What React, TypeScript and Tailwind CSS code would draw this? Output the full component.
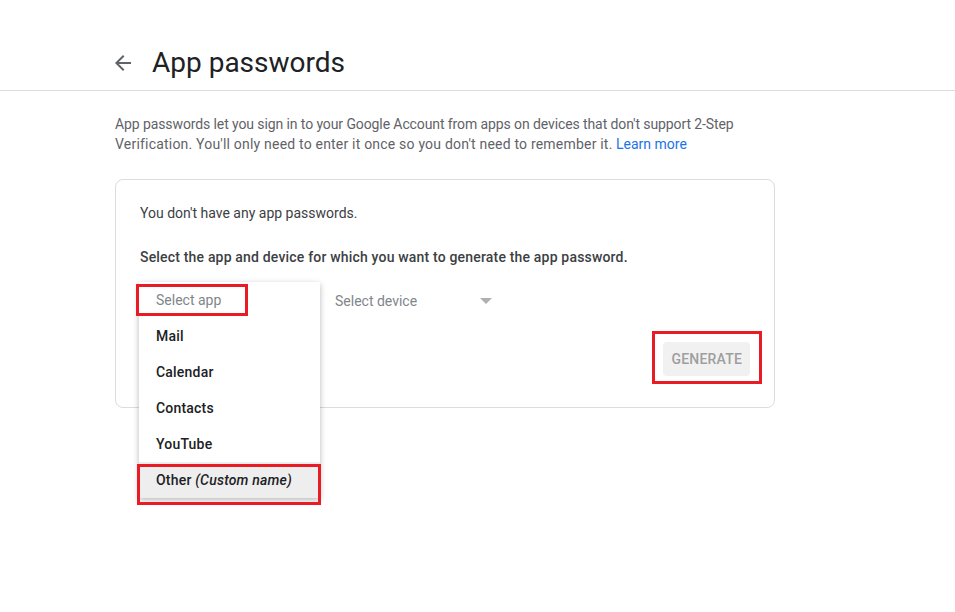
import React from "react";

const apps = ["Mail", "Calendar", "Contacts", "YouTube"];

const App: React.FC = () => {
  return (
    <div className="min-h-[612px] w-[955px] bg-white font-['Roboto','Liberation_Sans',sans-serif]">
      {/* Header */}
      <header className="h-[91px] border-b border-[#dadce0] pl-[111px] pt-[39px]">
        <div className="flex items-center">
          <svg width="24" height="24" viewBox="0 0 24 24" className="fill-[#5f6368]">
            <path d="M20 11H7.83l5.59-5.59L12 4l-8 8 8 8 1.41-1.41L7.83 13H20v-2z" />
          </svg>
          <h1 className="ml-[17px] text-[28px] leading-[48px] text-[#202124]">App passwords</h1>
        </div>
      </header>

      <main className="w-[660px] pl-[115px] box-content">
        <p className="mt-[23px] whitespace-nowrap text-[14px] leading-[20px] text-[#5f6368]">
          <span className="tracking-[-0.1px]">
            App passwords let you sign in to your Google Account from apps on devices that don't support 2-Step
          </span>
          <br />
          <span className="tracking-[0.2px]">
            Verification. You'll only need to enter it once so you don't need to remember it.
          </span>{" "}
          <a className="text-[#1a73e8]">Learn more</a>
        </p>

        {/* Card */}
        <div className="relative mt-[25px] h-[229px] rounded-lg border border-[#dadce0] px-[24px] pt-[23px]">
          <p className="text-[14px] leading-[20px] text-[#3c4043]">You don't have any app passwords.</p>
          <p className="mt-[24px] text-[14px] font-medium leading-[20px] tracking-[0.18px] text-[#3c4043]">
            Select the app and device for which you want to generate the app password.
          </p>

          <div className="mt-[16px] flex h-[36px] items-center">
            {/* Select app + open menu */}
            <div className="relative h-[36px] w-[180px]">
              <div className="absolute left-[-1px] top-[-1px] z-10 w-[181px] bg-white shadow-[0_2px_6px_rgba(0,0,0,0.28)]">
                <div className="flex h-[36px] items-center pl-[17px] text-[14px] text-[#80868b]">Select app</div>
                {apps.map((a) => (
                  <div
                    key={a}
                    className="flex h-[36px] items-center pl-[17px] text-[14px] font-medium tracking-[0.2px] text-[#202124]"
                  >
                    {a}
                  </div>
                ))}
                <div className="flex h-[36px] items-center bg-[#eeeeee] pl-[17px] text-[14px] font-medium tracking-[0.2px] text-[#202124]">
                  Other&nbsp;<i className="font-medium">(Custom name)</i>
                </div>

                {/* annotations */}
                <div className="absolute left-[-3px] top-[2px] h-[32px] w-[112px] border-[3px] border-[#e81c24]" />
                <div className="absolute left-[-2px] top-[182px] h-[41px] w-[184px] border-[3px] border-[#e81c24]" />
              </div>
            </div>

            {/* Select device */}
            <div className="flex h-[36px] w-[180px] items-center justify-between pl-[15px] pr-[8px]">
              <span className="text-[14px] text-[#80868b]">Select device</span>
              <span className="h-0 w-0 border-x-[6px] border-t-[6px] border-x-transparent border-t-[#b0b0b0]" />
            </div>
          </div>

          <div className="mt-[23px] flex justify-end">
            <div className="relative">
              <button className="h-[34px] rounded-[4px] bg-[#f1f1f1] px-[8px] text-[14px] font-medium tracking-[0.2px] text-[#9e9e9e]">
                GENERATE
              </button>
              <div className="absolute left-[-11px] top-[-11px] h-[53px] w-[110px] border-[3px] border-[#e81c24]" />
            </div>
          </div>
        </div>
      </main>
    </div>
  );
};

export default App;
